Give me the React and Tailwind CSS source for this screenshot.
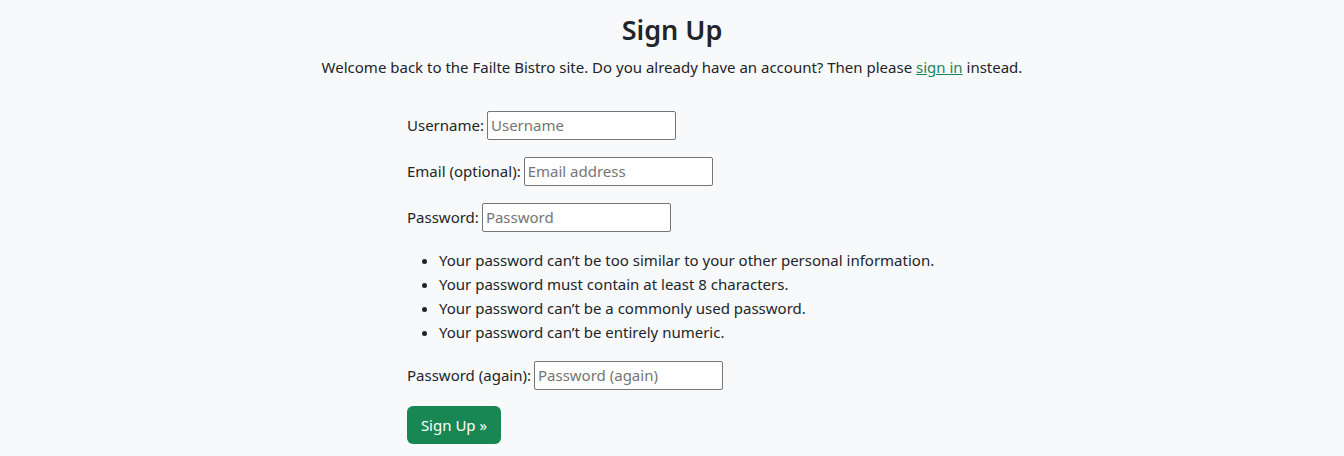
export default function App() {
  const rows1 = [
    ["Username:", "Username"],
    ["Email (optional):", "Email address"],
    ["Password:", "Password"],
  ];
  return (
    <div className="min-h-[456px] w-full bg-[#f8f9fa] text-[#212529] font-['Noto_Sans',sans-serif]">
      <div className="pt-[11px] text-center">
        <h1 className="text-[27px] leading-[38px] font-semibold mb-[6px]">Sign Up</h1>
        <p className="text-[15px] leading-[24px]">
          Welcome back to the Failte Bistro site. Do you already have an account? Then please{" "}
          <a href="#" className="text-[#198754] underline">sign in</a> instead.
        </p>
      </div>
      <form className="w-[530px] mx-auto mt-[31px] text-[15px] leading-[24px]">
        {rows1.map(([l, p]) => (
          <div key={l} className="flex items-center h-[30px] mb-4 gap-[3px]">
            <label>{l}</label>
            <input
              placeholder={p}
              className="w-[189px] h-[29px] border border-[#767676] rounded-[2px] bg-white px-[3px] text-[15px] placeholder:text-[#757575] outline-none"
            />
          </div>
        ))}
        <ul className="list-disc pl-8 mb-4 whitespace-nowrap">
          <li>Your password can’t be too similar to your other personal information.</li>
          <li>Your password must contain at least 8 characters.</li>
          <li>Your password can’t be a commonly used password.</li>
          <li>Your password can’t be entirely numeric.</li>
        </ul>
        <div className="flex items-center h-[30px] mb-4 gap-[3px]">
          <label>Password (again):</label>
          <input
            placeholder="Password (again)"
            className="w-[189px] h-[29px] border border-[#767676] rounded-[2px] bg-white px-[3px] text-[15px] placeholder:text-[#757575] outline-none"
          />
        </div>
        <button type="button" className="h-[38px] w-[94px] rounded-[6px] bg-[#198754] text-white text-[15px]">
          Sign Up »
        </button>
      </form>
    </div>
  );
}
